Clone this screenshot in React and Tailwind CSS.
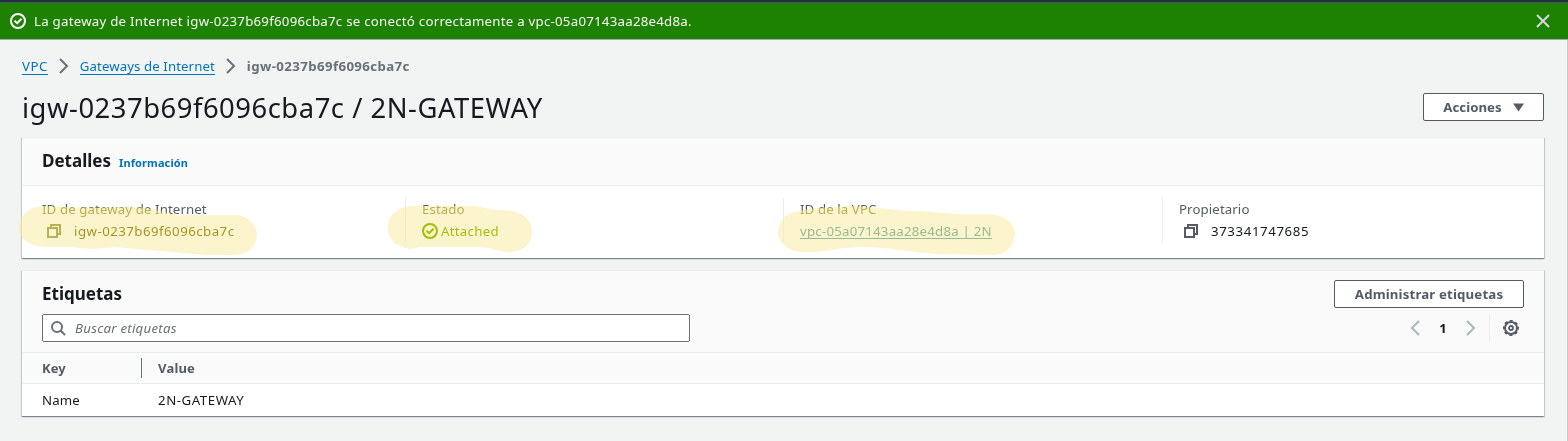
import React from "react";

const Copy = () => (
  <svg className="block h-4 w-4 shrink-0" viewBox="0 0 16 16" fill="none" stroke="#545b64" strokeWidth="2">
    <path d="M2 5h9v9H2z" />
    <path d="M5 5V2h9v9h-3" />
  </svg>
);

const Check = ({ color }) => (
  <svg className="block h-4 w-4 shrink-0" viewBox="0 0 16 16" fill="none" stroke={color} strokeWidth="2">
    <circle cx="8" cy="8" r="7" />
    <path d="M4.5 7.8 7.2 10.2 11.5 5.8" />
  </svg>
);

const Chevron = ({ color, left }) => (
  <svg className="block h-4 w-4 shrink-0" viewBox="0 0 16 16" fill="none" stroke={color} strokeWidth="2">
    <path d={left ? "M12 1 5 8l7 7" : "M4 1l7 7-7 7"} />
  </svg>
);

const Gear = () => (
  <svg className="block h-4 w-4 shrink-0" viewBox="0 0 16 16" fill="none" stroke="#545b64">
    <circle cx="8" cy="8" r="6" strokeWidth="2" />
    <circle cx="8" cy="8" r="7.2" strokeWidth="1.6" strokeDasharray="3.2 2.455" strokeDashoffset="1.6" />
    <circle cx="8" cy="8" r="2" strokeWidth="1.8" />
  </svg>
);

const highlights = [
  "M42 206 C80 208 100 208 130 207 C160 208 165 215 185 215 L238 215 C250 217 257 226 257 235 C256 248 246 255 234 255 L205 255 L160 251 L115 247 L92 249 L70 247 L45 247 C28 246 19 238 19 228 C20 214 30 207 42 206Z",
  "M412 206 L475 206 C487 208 488 210 500 210 C514 210 532 214 532 232 C532 245 522 252 509 252 C495 251 492 247 478 247 L420 247 L412 249 C398 248 388 240 388 228 C388 215 398 207 412 206Z",
  "M800 211 C815 207 830 208 850 206 C885 207 900 212 920 211 C945 213 960 215 990 214 C1005 215 1015 224 1015 234 C1014 246 1006 254 995 255 L940 254 C910 253 900 248 865 247 C840 247 830 251 815 252 L800 252 C786 250 778 242 778 232 C779 220 786 212 800 211Z",
];

const Field = ({ label, children, className }) => (
  <div className={`h-[44px] ${className}`}>
    <div className="h-[22px] leading-[22px] tracking-[0.1px] text-[#545b64]">{label}</div>
    <div className="flex h-[22px] items-center">{children}</div>
  </div>
);

const card = "bg-white shadow-[0_1px_1px_0_rgba(0,28,36,0.3),1px_1px_1px_0_rgba(0,28,36,0.15),-1px_1px_1px_0_rgba(0,28,36,0.15)] border-t border-[#eaeded]";
const button = "flex h-[28px] items-center justify-center rounded-[2px] border border-[#545b64] bg-white font-bold text-[#545b64]";

export default function App() {
  return (
    <div className="relative h-[441px] w-full overflow-hidden whitespace-nowrap bg-[#f2f3f3] font-['Noto_Sans',sans-serif] text-[13.25px] leading-[22px] text-[#16191f]">
      <div className="h-[2px] bg-[#232f3e]" />
      <div className="flex h-[38px] items-center border-t border-b border-t-[#4b5563] border-b-[#a3aaaa] bg-[#1d8102] pl-[10px] pr-[17px] text-[#f8f8f8]">
        <Check color="#fff" />
        <span className="ml-2 tracking-[0.25px]">La gateway de Internet igw-0237b69f6096cba7c se conectó correctamente a vpc-05a07143aa28e4d8a.</span>
        <svg className="ml-auto block h-4 w-4" viewBox="0 0 16 16" stroke="#d5dbdb" strokeWidth="2"><path d="M2 2l12 12M14 2 2 14" /></svg>
      </div>
      <div className="h-[401px] border-r border-[#c5cbcb] pl-[22px] pr-[23px]">
        <nav className="flex h-[52px] items-center text-[#0073bb]">
          <a className="h-[18px] border-b border-[#0073bb] leading-[19px] tracking-[0.5px]">VPC</a>
          <span className="mx-2"><Chevron color="#687078" /></span>
          <a className="h-[18px] border-b border-[#0073bb] leading-[19px] tracking-[0.08px]">Gateways de Internet</a>
          <span className="mx-2"><Chevron color="#687078" /></span>
          <span className="font-bold tracking-[0.39px] text-[#687078]">igw-0237b69f6096cba7c</span>
        </nav>
        <div className="flex h-[45px] items-start justify-between">
          <h1 className="mt-[-2px] text-[27.4px] leading-[35px] tracking-[0.53px]">igw-0237b69f6096cba7c / 2N-GATEWAY</h1>
          <button className={`${button} mt-px w-[121px] gap-[11px]`}>
            <span>Acciones</span>
            <svg className="block h-[9px] w-[11px]" viewBox="0 0 11 9" fill="#545b64"><path d="M0 .5h11L5.5 8.5z" /></svg>
          </button>
        </div>
        <section className={`${card} h-[121px]`}>
          <div className="flex h-[48px] items-baseline border-b border-[#eaeded] bg-[#fafafa] pl-5 pt-[12px]">
            <h2 className="text-[17px] font-bold">Detalles</h2>
            <a className="ml-2 text-[11px] font-bold tracking-[0.12px] text-[#0073bb]">Información</a>
          </div>
          <div className="flex pt-[12px]">
            <Field label="ID de gateway de Internet" className="w-[383px] pl-5">
              <span className="ml-1 mr-3"><Copy /></span><span className="tracking-[0.47px]">igw-0237b69f6096cba7c</span>
            </Field>
            <Field label="Estado" className="w-[378px] border-l border-[#eaeded] pl-4">
              <span className="mr-[3px]"><Check color="#1d8102" /></span><span className="tracking-[0.27px] text-[#1d8102]">Attached</span>
            </Field>
            <Field label="ID de la VPC" className="w-[379px] border-l border-[#eaeded] pl-4">
              <a className="mb-px h-[17px] border-b border-[#0073bb] leading-[18px] tracking-[0.22px] text-[#0073bb]">vpc-05a07143aa28e4d8a | 2N</a>
            </Field>
            <Field label="Propietario" className="border-l border-[#eaeded] pl-4">
              <span className="ml-1 mr-3"><Copy /></span><span className="tracking-[0.6px]">373341747685</span>
            </Field>
          </div>
        </section>
        <section className={`${card} mt-[12px] h-[146px]`}>
          <div className="h-[82px] border-b border-[#eaeded] bg-[#fafafa] pl-5 pr-5 pt-[9px]">
            <div className="flex h-[34px] items-start justify-between">
              <h2 className="mt-[3px] text-[17px] font-bold">Etiquetas</h2>
              <button className={`${button} w-[190px] tracking-[0.15px]`}>Administrar etiquetas</button>
            </div>
            <div className="flex h-[28px] items-center justify-between">
              <div className="flex h-[28px] w-[648px] items-center rounded-[2px] border border-[#687078] bg-white pl-[7px]">
                <svg className="block h-4 w-4" viewBox="0 0 16 16" fill="none" stroke="#687078" strokeWidth="2"><circle cx="7" cy="7" r="5" /><path d="m10.5 10.5 4.5 4.5" /></svg>
                <span className="ml-[9px] italic tracking-[0.26px] text-[#687078]">Buscar etiquetas</span>
              </div>
              <div className="flex items-center">
                <Chevron color="#aab7b8" left />
                <span className="w-[40px] text-center text-[13px] font-bold">1</span>
                <Chevron color="#aab7b8" />
                <span className="ml-[10px] mr-[13px] h-[28px] w-px bg-[#eaeded]" />
                <span className="mr-[5px]"><Gear /></span>
              </div>
            </div>
          </div>
          <div className="flex h-[31px] items-center border-b border-[#eaeded] bg-[#fafafa] pl-5 text-[13px] font-bold text-[#545b64]">
            <span className="w-[99px]">Key</span><span className="mr-4 h-5 w-px bg-[#687078]" /><span className="tracking-[0.2px]">Value</span>
          </div>
          <div className="flex h-[32px] items-center pl-5">
            <span className="w-[116px] tracking-[0.15px]">Name</span><span className="tracking-[0.55px]">2N-GATEWAY</span>
          </div>
        </section>
      </div>
      <svg className="pointer-events-none absolute left-0 top-0 h-[441px] w-[1568px] mix-blend-screen" viewBox="0 0 1568 441" fill="#989008">
        {highlights.map((d) => <path key={d} d={d} />)}
      </svg>
      <svg className="pointer-events-none absolute left-0 top-0 h-[441px] w-[1568px] mix-blend-multiply" viewBox="0 0 1568 441" fill="#fcf4cc">
        {highlights.map((d) => <path key={d} d={d} />)}
      </svg>
    </div>
  );
}
